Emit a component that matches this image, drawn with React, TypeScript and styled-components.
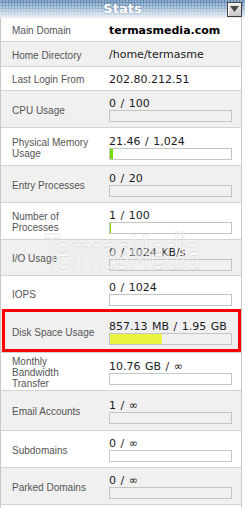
import React from "react";
import styled, { createGlobalStyle } from "styled-components";

const GlobalStyle = createGlobalStyle`
  html, body { margin: 0; padding: 0; background: #fff; }
  body { font-family: "DejaVu Sans", Verdana, sans-serif; }
`;

const Panel = styled.div`
  position: relative;
  width: 245px;
  overflow: hidden;
`;

const Header = styled.div`
  display: grid;
  grid-template-columns: 1fr auto 1fr;
  align-items: center;
  height: 18px;
  background-color: #9db7d2;
  background-image:
    radial-gradient(circle at 1px 1px, rgba(255, 255, 255, 0.35) 0.7px, transparent 1px),
    linear-gradient(to bottom, #527ca7 0px, #6f95bd 3px, #8aabcc 7px, #b3c8dd 11px, #d3dfeb 15px, #e6edf4 18px);
  background-size: 3px 3px, 100% 100%;
`;

const Title = styled.div`
  grid-column: 2;
  color: #fff;
  font: bold 13px/18px "DejaVu Sans", Verdana, sans-serif;
  text-shadow: 0 0 2px rgba(40, 70, 110, 0.55);
`;

const Toggle = styled.div`
  grid-column: 3;
  justify-self: end;
  margin-right: 3px;
  width: 15px;
  height: 15px;
  box-sizing: border-box;
  border: 1px solid #3e3e3e;
  box-shadow: inset 1px 1px 0 #fff;
  background: linear-gradient(to bottom, #ececec, #c9c9c9);
  display: flex;
  align-items: center;
  justify-content: center;
`;

const Table = styled.div`
  width: 242px;
  box-sizing: border-box;
  border-left: 1px solid #c9c9c9;
  border-right: 1px solid #c9c9c9;
`;

const Row = styled.div<{ $h: number; $alt: boolean }>`
  position: relative;
  display: grid;
  grid-template-columns: 108px 1fr;
  align-items: center;
  height: ${(p) => p.$h}px;
  box-sizing: border-box;
  padding-top: 2px;
  border-bottom: 1px solid #d3d3d3;
  background: ${(p) => (p.$alt ? "#f0f0f0" : "#fff")};
`;

const Label = styled.div`
  padding-left: 11px;
  padding-right: 14px;
  font: 10px/11px "Liberation Sans", Arial, sans-serif;
  color: #555;
`;

const ValueCell = styled.div`
  padding-right: 9px;
  display: flex;
  flex-direction: column;
`;

const ValueText = styled.div<{ $bold?: boolean }>`
  font: ${(p) => (p.$bold ? "bold" : "normal")} 11px/12px "DejaVu Sans", Verdana, sans-serif;
  word-spacing: 1px;
  color: ${(p) => (p.$bold ? "#000" : "#1a1a22")};
  white-space: nowrap;
`;

const Bar = styled.div`
  height: 12px;
  box-sizing: border-box;
  border: 1px solid #c4c4c4;
  display: flex;
`;

const Fill = styled.div<{ $color: string }>`
  height: 100%;
  background: ${(p) => p.$color};
`;

const Highlight = styled.div`
  position: absolute;
  top: -2px;
  bottom: 0;
  left: 1px;
  right: 0;
  border: 3px solid #f00;
  pointer-events: none;
`;

const Watermark = styled.div`
  position: absolute;
  top: 235px;
  left: 123px;
  transform: translateX(-50%) scaleX(0.55);
  font: 48px/34px "DejaVu Sans Condensed", "DejaVu Sans", sans-serif;
  color: rgba(255, 255, 255, 0.5);
  -webkit-text-stroke: 1px rgba(200, 200, 200, 0.5);
  white-space: nowrap;
  pointer-events: none;
`;

type Stat = {
  label: string;
  value: string;
  h: number;
  bold?: boolean;
  bar?: boolean;
  pct?: number;
  color?: string;
  mark?: boolean;
};

const stats: Stat[] = [
  { label: "Main Domain", value: "termasmedia.com", h: 24, bold: true },
  { label: "Home Directory", value: "/home/termasme", h: 25 },
  { label: "Last Login From", value: "202.80.212.51", h: 24 },
  { label: "CPU Usage", value: "0 / 100", h: 37, bar: true, pct: 0 },
  { label: "Physical Memory Usage", value: "21.46 / 1,024", h: 38, bar: true, pct: 2.6, color: "#72dd00" },
  { label: "Entry Processes", value: "0 / 20", h: 37, bar: true, pct: 0 },
  { label: "Number of Processes", value: "1 / 100", h: 37, bar: true, pct: 1, color: "#86d400" },
  { label: "I/O Usage", value: "0 / 1024 KB/s", h: 36, bar: true, pct: 0 },
  { label: "IOPS", value: "0 / 1024", h: 35, bar: true, pct: 0 },
  { label: "Disk Space Usage", value: "857.13 MB / 1.95 GB", h: 42, bar: true, pct: 43, color: "#eaf542", mark: true },
  { label: "Monthly Bandwidth Transfer", value: "10.76 GB / \u221E", h: 38, bar: true, pct: 0 },
  { label: "Email Accounts", value: "1 / \u221E", h: 40, bar: true, pct: 0 },
  { label: "Subdomains", value: "0 / \u221E", h: 37, bar: true, pct: 0 },
  { label: "Parked Domains", value: "0 / \u221E", h: 37, bar: true, pct: 0 },
];

export default function App() {
  return (
    <>
      <GlobalStyle />
      <Panel>
        <Header>
          <Title>Stats</Title>
          <Toggle>
            <svg width="9" height="6" viewBox="0 0 9 6">
              <path d="M0 0 H9 L4.5 6 Z" fill="#4a4a4a" />
            </svg>
          </Toggle>
        </Header>
        <Table>
          {stats.map((s, i) => (
            <Row key={s.label} $h={s.h} $alt={i % 2 === 1}>
              <Label>{s.label}</Label>
              <ValueCell>
                <ValueText $bold={s.bold}>{s.value}</ValueText>
                {s.bar && (
                  <Bar>
                    {s.pct && s.color ? (
                      <Fill $color={s.color} style={{ width: `${s.pct}%` }} />
                    ) : null}
                  </Bar>
                )}
              </ValueCell>
              {s.mark && <Highlight />}
            </Row>
          ))}
          <Row $h={12} $alt={false} />
        </Table>
        <Watermark>TermasMedia</Watermark>
      </Panel>
    </>
  );
}
